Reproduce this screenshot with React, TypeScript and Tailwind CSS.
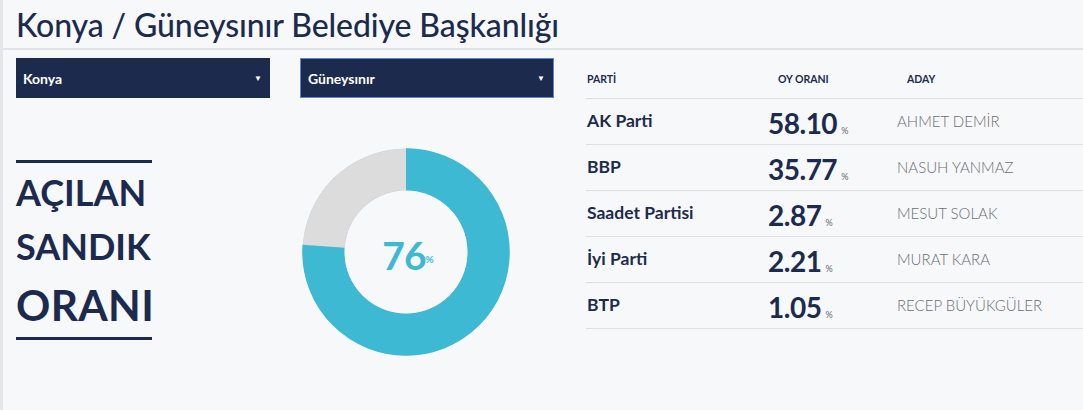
import React from "react";

const rows = [
  { party: "AK Parti", value: "58.10", name: "AHMET DEMİR" },
  { party: "BBP", value: "35.77", name: "NASUH YANMAZ" },
  { party: "Saadet Partisi", value: "2.87", name: "MESUT SOLAK" },
  { party: "İyi Parti", value: "2.21", name: "MURAT KARA" },
  { party: "BTP", value: "1.05", name: "RECEP BÜYÜKGÜLER" },
];

function Select({ label, focused }: { label: string; focused?: boolean }) {
  return (
    <div
      className={
        "flex h-[40px] w-[254px] items-center justify-between bg-[#1c2b4d] pl-[7px] pr-[8px] text-[14px] font-bold text-white " +
        (focused ? "border border-[#5b86d6]" : "")
      }
    >
      <span>{label}</span>
      <span className="text-[8px]">▼</span>
    </div>
  );
}

function Donut() {
  const r = 82.5;
  const c = 2 * Math.PI * r;
  return (
    <div className="relative h-[210px] w-[210px]">
      <svg width="210" height="210" viewBox="0 0 210 210">
        <circle cx="105" cy="105" r="103.5" fill="#d2d2d2" />
        <circle cx="105" cy="105" r={r} fill="none" stroke="#dcdcdc" strokeWidth="41" />
        <circle
          cx="105"
          cy="105"
          r={r}
          fill="none"
          stroke="#3db9d3"
          strokeWidth="42.5"
          strokeDasharray={`${c * 0.76} ${c}`}
          transform="rotate(-90 105 105)"
        />
        <circle cx="105" cy="105" r="61.5" fill="#f7f8fa" />
      </svg>
      <div className="absolute inset-0 flex items-center justify-center pl-[4px] pt-[6px] text-[#3db9d3]">
        <span className="text-[39px] font-bold leading-none tracking-[-1px]">76</span>
        <span className="mt-[8px] text-[10px] font-bold">%</span>
      </div>
    </div>
  );
}

export default function App() {
  return (
    <div className="h-[410px] w-[1083px] overflow-hidden border-l-[3px] border-[#e4e6ea] bg-[#f7f8fa] font-['Lato','Liberation_Sans',sans-serif] text-[#1c2b4d]">
      <div className="flex h-[50px] items-center border-b-2 border-[#e0e3e7] pl-[13px]">
        <h1 className="pt-[1px] text-[32px] font-medium leading-none tracking-[-0.1px]">
          Konya / Güneysınır Belediye Başkanlığı
        </h1>
      </div>
      <div className="flex pl-[13px]">
        <div className="w-[570px]">
          <div className="mt-[8px] flex gap-[30px]">
            <Select label="Konya" />
            <Select label="Güneysınır" focused />
          </div>
          <div className="flex items-start">
            <div className="mt-[62px] w-[136px] border-y-[3px] border-[#1c2b4d] pt-[2px] pb-[6px] font-bold uppercase">
              <div className="text-[36px] leading-[54px]">AÇILAN</div>
              <div className="text-[36px] leading-[55px]">SANDIK</div>
              <div className="pt-[5px] text-[42.5px] leading-[52px] tracking-[0.3px]">ORANI</div>
            </div>
            <div className="ml-[149px] mt-[49px]">
              <Donut />
            </div>
          </div>
        </div>
        <div className="flex-1 pt-[9px]">
          <div className="flex h-[40px] items-center border-b border-[#dcdfe3] pt-[2px] text-[10.5px] font-bold">
            <div className="w-[182px] pl-[1px]">PARTİ</div>
            <div className="w-[129px] pl-[10px]">OY ORANI</div>
            <div className="pl-[10px]">ADAY</div>
          </div>
          {rows.map((r) => (
            <div key={r.party} className="flex h-[46px] items-center border-b border-[#dcdfe3]">
              <div className="w-[182px] pl-[1px] text-[17.5px] font-bold">{r.party}</div>
              <div className="flex w-[129px] items-baseline pt-[4px]">
                <span className="text-[28px] font-bold leading-none tracking-[-0.5px]">{r.value}</span>
                <span className="ml-[4px] text-[9px] text-[#666]">%</span>
              </div>
              <div className="text-[15px] font-light text-[#6b6e73]">{r.name}</div>
            </div>
          ))}
        </div>
      </div>
    </div>
  );
}
